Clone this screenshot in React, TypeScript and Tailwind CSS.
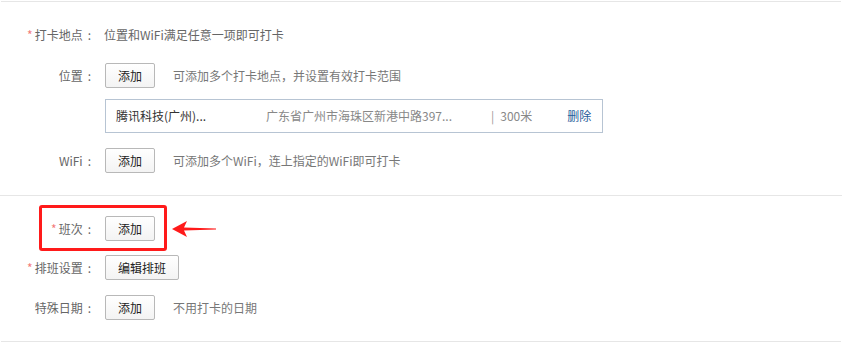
const font = {
  fontFamily: '"Microsoft YaHei", "Noto Sans CJK SC", "Noto Sans", sans-serif',
}

function Label({ text, required }: { text: string; required?: boolean }) {
  return (
    <div className="w-[96px] shrink-0 pr-[5px] text-right text-[#666]">
      {required && <span className="mr-[2px] text-[#f37b7b]">*</span>}
      {text}
      <span className="ml-[5px]">:</span>
    </div>
  )
}

function Btn({ children }: { children: React.ReactNode }) {
  return (
    <button className="h-[25px] shrink-0 rounded-[2px] border border-[#b8b8b8] bg-gradient-to-b from-white to-[#f3f3f3] px-[12px] text-[12px] leading-none text-[#222]">
      {children}
    </button>
  )
}

function Row({
  label,
  required,
  children,
  className = '',
}: {
  label: string
  required?: boolean
  children: React.ReactNode
  className?: string
}) {
  return (
    <div className={`flex items-center ${className}`}>
      <Label text={label} required={required} />
      <div className="ml-[9px] flex items-center">{children}</div>
    </div>
  )
}

export default function App() {
  return (
    <div className="h-[345px] w-[842px] bg-white text-[12px]" style={font}>
      <div className="mx-px h-px bg-[#e6e6e6] mt-px" />

      {/* 打卡地点 */}
      <div className="pt-[21px] pb-[22px]">
        <Row label="打卡地点" required className="h-[24px]">
          <span className="-ml-px text-[#666]">位置和WiFi满足任意一项即可打卡</span>
        </Row>

        <Row label="位置" className="mt-[16px]">
          <Btn>添加</Btn>
          <span className="ml-[18px] text-[#777]">可添加多个打卡地点，并设置有效打卡范围</span>
        </Row>

        <div className="ml-[105px] mt-[11px] flex h-[34px] w-[498px] items-center border border-[#b7c4d3] text-[12px]">
          <span className="ml-[10px] w-[150px] text-[#333]">腾讯科技(广州)...</span>
          <span className="w-[225px] text-[#888]">广东省广州市海珠区新港中路397...</span>
          <span className="text-[#999]">|</span>
          <span className="ml-[6px] w-[67px] text-[#888]">300米</span>
          <span className="text-[#1f5d99]">删除</span>
        </div>

        <Row label="WiFi" className="mt-[15px]">
          <Btn>添加</Btn>
          <span className="ml-[18px] text-[#777]">可添加多个WiFi，连上指定的WiFi即可打卡</span>
        </Row>
      </div>

      <div className="h-px bg-[#e6e6e6]" />

      {/* 班次 */}
      <div className="pt-[20px] pb-[21px]">
        <div className="relative">
          <Row label="班次" required>
            <Btn>添加</Btn>
          </Row>
          <div className="absolute left-[39px] top-[-11px] h-[46px] w-[128px] rounded-[3px] border-[3px] border-[#ff1a1a]" />
          <svg
            className="absolute left-[172px] top-[4px]"
            width="44"
            height="18"
            viewBox="0 0 44 18"
          >
            <path d="M0 9 L15 1 L12 7.6 L44 8.6 L44 9.4 L12 10.4 L15 17 Z" fill="#ff1a1a" />
          </svg>
        </div>

        <Row label="排班设置" required className="mt-[14px]">
          <Btn>编辑排班</Btn>
        </Row>

        <Row label="特殊日期" className="mt-[15px]">
          <Btn>添加</Btn>
          <span className="ml-[18px] text-[#777]">不用打卡的日期</span>
        </Row>
      </div>

      <div className="mx-px h-px bg-[#e6e6e6]" />
    </div>
  )
}
